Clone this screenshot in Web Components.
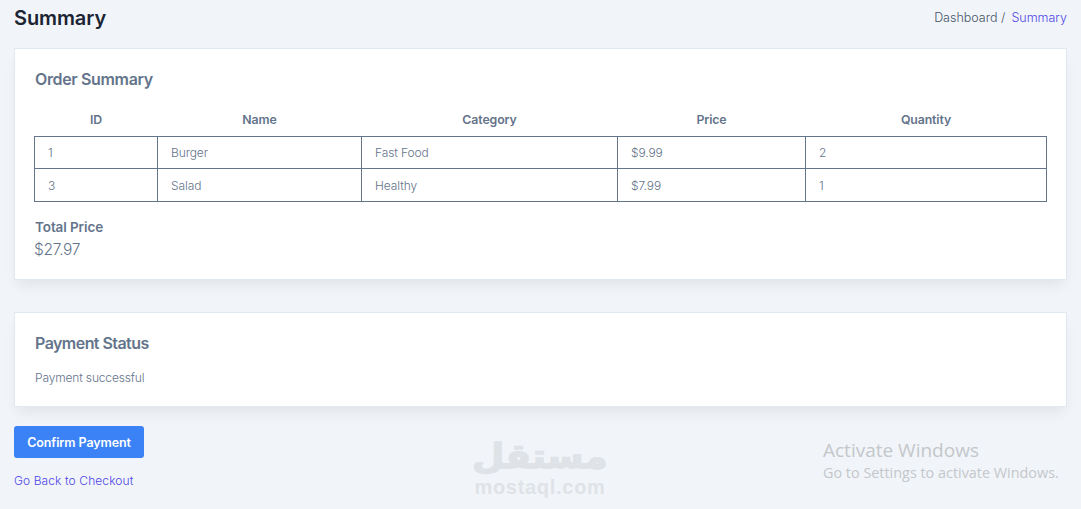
<!DOCTYPE html>
<html lang="en"><head><meta charset="utf-8"><title>Summary</title>
<style>
html,body{margin:0;height:509px;overflow:hidden;background:#f1f5f9}
body{font-family:Inter,"Liberation Sans",sans-serif;color:#64748b;font-size:13px}
</style></head><body>
<summary-page>
  <page-head title-text="Summary" slot="head"></page-head>
  <ui-card pad="order" heading="Order Summary">
    <order-table></order-table>
    <total-price label="Total Price" value="$27.97"></total-price>
  </ui-card>
  <ui-card pad="status" heading="Payment Status">
    <status-line>Payment successful</status-line>
  </ui-card>
  <pay-actions></pay-actions>
  <site-mark></site-mark>
  <win-mark></win-mark>
</summary-page>
<script>
const def=(name,css,html)=>{customElements.define(name,class extends HTMLElement{
  connectedCallback(){ if(this.shadowRoot)return; const r=this.attachShadow({mode:'open'});
    r.innerHTML=`<style>${css}</style>`+(typeof html==='function'?html(this):html); }
});};
def('summary-page',`:host{display:flex;flex-direction:column;position:relative;height:509px;box-sizing:border-box;padding:6px 14px 0;overflow:hidden}`,`<slot name="head"></slot><slot></slot>`);
def('page-head',`:host{display:flex;justify-content:space-between;align-items:center;height:24px;margin-bottom:18px}
 h1{margin:0;font:600 20px/24px Inter,sans-serif;color:#1c2434;letter-spacing:-.1px}
 nav{font:300 12.5px/20px Inter,sans-serif;color:#475569;display:flex;gap:6px;letter-spacing:0}
 a{color:#4f46e5}`,e=>`<h1>${e.getAttribute('title-text')}</h1><nav><span>Dashboard /</span><a>Summary</a></nav>`);
def('ui-card',`:host{display:block;background:#fff;border:1px solid #e2e8f0;box-shadow:0 8px 13px -3px rgba(0,0,0,.07);box-sizing:border-box;padding:0 19px}
 :host([pad=order]){height:232px;margin-bottom:32px;padding-top:19px}
 :host([pad=status]){height:95px;margin-bottom:19px;padding-top:19px}
 h3{margin:0 0 0 1px;font:600 16px/22px Inter,sans-serif;color:#64748b;letter-spacing:-.35px}
 :host([pad=order]) h3{margin-bottom:16px}
 :host([pad=status]) h3{margin-bottom:16px;letter-spacing:-.55px}`,e=>`<h3>${e.getAttribute('heading')}</h3><slot></slot>`);
def('order-table',`:host{display:block}
 table{border-collapse:collapse;table-layout:fixed;width:1012px;font:300 12px/16px Inter,sans-serif;color:#64748b;letter-spacing:-.1px}
 th{font-weight:600;height:30px;padding:0 0 2px;box-sizing:border-box;text-align:center;font-size:12.3px}
 td{border:1px solid #64748b;height:32px;padding:2px 13px 0;box-sizing:border-box}
 tr.tall td{height:33px}`,`<table>
 <colgroup><col style="width:123px"><col style="width:204px"><col style="width:256px"><col style="width:188px"><col style="width:241px"></colgroup>
 <thead><tr><th>ID</th><th>Name</th><th>Category</th><th>Price</th><th>Quantity</th></tr></thead>
 <tbody><tr><td>1</td><td>Burger</td><td>Fast Food</td><td>$9.99</td><td>2</td></tr>
 <tr class="tall"><td>3</td><td>Salad</td><td>Healthy</td><td>$7.99</td><td>1</td></tr></tbody></table>`);
def('total-price',`:host{display:block;margin:16px 0 0 1px}
 b{display:block;font:600 13.5px/18px Inter,sans-serif;color:#64748b;letter-spacing:-.1px}
 span{display:block;font:300 15.5px/28px Inter,sans-serif;color:#64748b;letter-spacing:-.3px;margin-left:-1px}`,e=>`<b>${e.getAttribute('label')}</b><span>${e.getAttribute('value')}</span>`);
def('status-line',`:host{display:block;margin-left:1px;font:300 12px/16px Inter,sans-serif;color:#64748b;letter-spacing:-.15px}`,`<slot></slot>`);
def('pay-actions',`:host{display:flex;flex-direction:column;align-items:flex-start;gap:14px}
 button{width:130px;height:32px;border:0;border-radius:3px;background:#3b82f6;color:#fff;font:600 12.5px/16px Inter,sans-serif;padding:1px 0 0;letter-spacing:-.1px}
 a{font:300 12px/18px Inter,sans-serif;color:#4f46e5;letter-spacing:.1px}`,`<button>Confirm Payment</button><a>Go Back to Checkout</a>`);
def('site-mark',`:host{position:absolute;left:470px;top:437px;width:140px;text-align:center;color:#dfe3e7;pointer-events:none}
 .ar{font:700 34px/39px "DejaVu Sans",sans-serif;display:block;height:39px;transform:scaleX(1.09);-webkit-text-stroke:1.5px #dfe3e7}
 .en{font:700 20px/23px "Liberation Sans",sans-serif;display:block;letter-spacing:.7px}`,`<span class="ar" lang="ar" dir="rtl">مستقل</span><span class="en">mostaql.com</span>`);
def('win-mark',`:host{position:absolute;left:823px;top:439px;color:#c4c7cb;pointer-events:none;font-family:"Open Sans",sans-serif}
 .a{display:block;font-size:19px;line-height:22px}
 .b{display:block;font-size:14.4px;line-height:24px}`,`<span class="a">Activate Windows</span><span class="b">Go to Settings to activate Windows.</span>`);
</script></body></html>
